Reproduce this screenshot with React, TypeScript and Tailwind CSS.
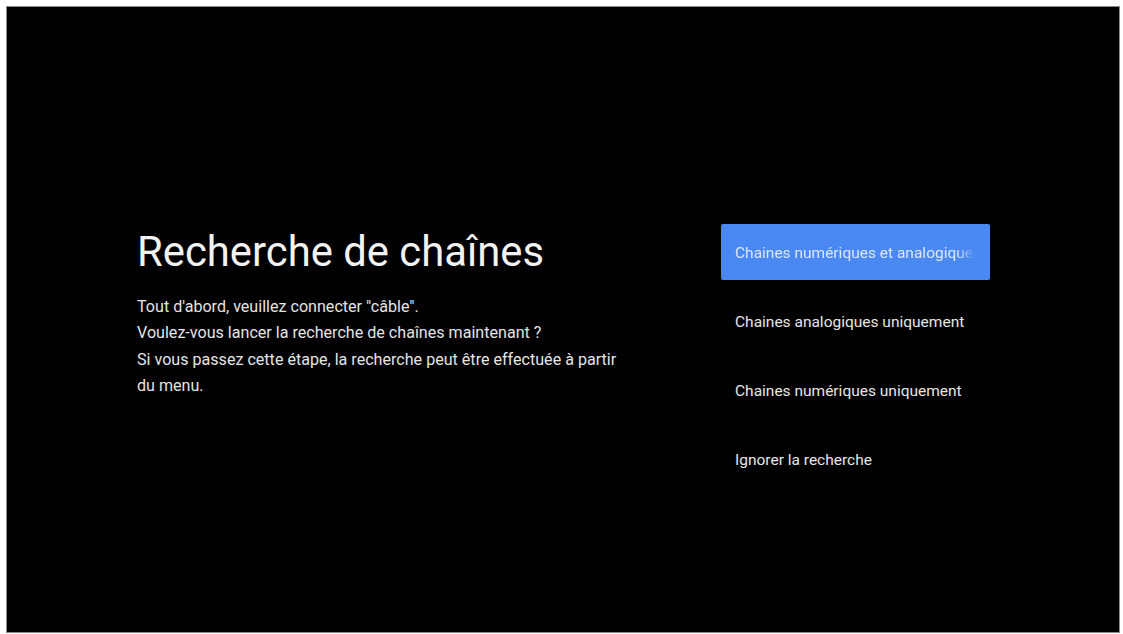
import React from "react";

const options = [
  "Chaines numériques et analogiques",
  "Chaines analogiques uniquement",
  "Chaines numériques uniquement",
  "Ignorer la recherche",
];

const App = () => {
  const selected = 0;

  return (
    <div className="w-[1123px] h-[634px] bg-white p-[6px] font-['Roboto',sans-serif]">
      <div className="w-[1114px] h-[627px] bg-black border border-[#8a8a8a] flex items-start">
        <div className="w-[714px] pl-[130px] pt-[223px]">
          <h1 className="text-[41.8px] leading-[44px] text-[#f2f2f2]">
            Recherche de chaînes
          </h1>
          <div className="mt-[20px] text-[16.1px] leading-[26.4px] text-[#e4e4e4] w-[494px]">
            <p>Tout d'abord, veuillez connecter "câble".</p>
            <p>Voulez-vous lancer la recherche de chaînes maintenant ?</p>
            <p>
              Si vous passez cette étape, la recherche peut être effectuée à partir du menu.
            </p>
          </div>
        </div>
        <ul className="flex flex-col pt-[212px]">
          {options.map((label, i) => (
            <li key={label} className="h-[69px] flex items-center">
              <div
                className={
                  i === selected
                    ? "w-[269px] h-[56px] -mt-[4px] pt-[4px] bg-[#4a88f2] rounded-[2px] px-[14px] flex items-center text-[15.5px] text-[#dbe7ff]"
                    : "w-[269px] h-[56px] px-[14px] flex items-center text-[15.5px] text-[#e6e6e6]"
                }
              >
                <span
                  className={
                    i === selected
                      ? "flex-1 min-w-0 overflow-hidden whitespace-nowrap [mask-image:linear-gradient(to_right,black_92%,transparent)]"
                      : "whitespace-nowrap"
                  }
                >
                  {label}
                </span>
              </div>
            </li>
          ))}
        </ul>
      </div>
    </div>
  );
};

export default App;
